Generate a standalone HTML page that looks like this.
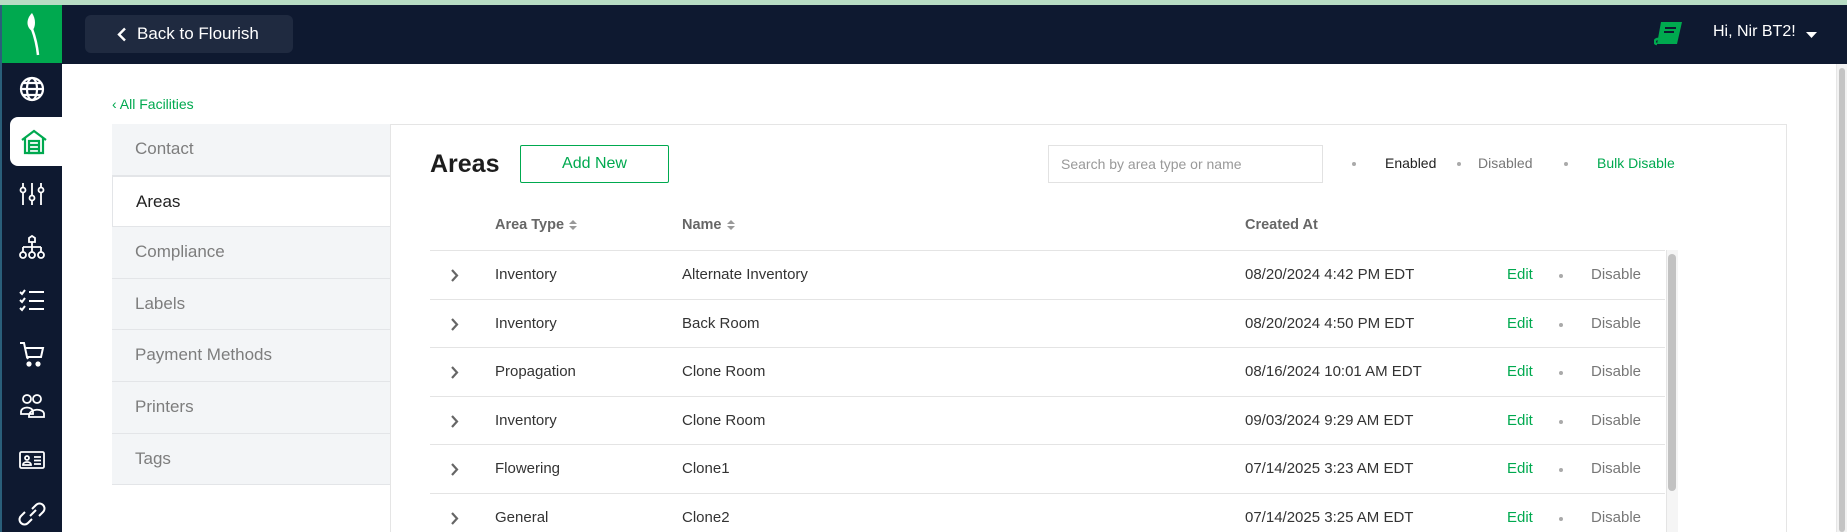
<!DOCTYPE html>
<html><head><meta charset="utf-8"><style>
*{box-sizing:border-box;margin:0;padding:0}
html,body{width:1847px;height:532px;overflow:hidden}
body{background:#fff;font-family:"Liberation Sans",sans-serif;position:relative}
.abs{position:absolute}
.top{left:0;top:0;width:1847px;height:5px;background:#b7dcc3}
.hdr{left:0;top:5px;width:1847px;height:59px;background:#0e1930}
.side{left:0;top:5px;width:62px;height:527px;background:#0e1930;border-left:2px solid #2a5f7a}
.logo{left:2px;top:5px;width:60px;height:58px;background:#00a94f}
.back{left:85px;top:15px;width:208px;height:38px;background:#1f2a40;border-radius:6px;color:#fff;font-size:17px;line-height:38px;padding-left:52px}
.ic{left:18px;width:28px;height:28px}
.tabs{left:112px;top:124px;width:278px}
.tab{height:51.6px;background:#f3f5f7;border-bottom:1px solid #e3e5e8;color:#7d7d7d;font-size:17px;line-height:50px;padding-left:23px}
.tab.act{background:#fff;color:#222;border:1px solid #e3e5e8;border-right:none}
.panel{left:390px;top:124px;width:1397px;height:420px;border:1px solid #e5e5e5}
.row{left:430px;width:1235px;height:49px;border-top:1px solid #e4e4e4;font-size:15px;color:#333}
.row span{position:absolute;top:15px}
.g{color:#00a94f}
.gr{color:#777}
.dot{width:4px;height:4px;border-radius:2px;background:#aaa;position:absolute}
.srt{display:inline-block;vertical-align:middle;margin-left:4px}
</style></head><body>
<div class="abs top"></div>
<div class="abs hdr"></div>
<div class="abs side"></div>
<div class="abs logo"><svg width="60" height="58" viewBox="0 0 60 58"><path d="M30 8 C24 14 24 22 30 26 C34 22 34 14 30 8Z" fill="#fff"/><path d="M30 24 C33 32 35 40 36 50" stroke="#fff" stroke-width="2.5" fill="none"/></svg></div>
<div class="abs back"><svg class="abs" style="left:32px;top:12px" width="10" height="15" viewBox="0 0 10 15"><path d="M8 1.5 L2 7.5 L8 13.5" stroke="#fff" stroke-width="2.4" fill="none"/></svg>Back to Flourish</div>
<svg class="abs ic" style="top:75px" viewBox="0 0 28 28" fill="none" stroke="#fff" stroke-width="2.2"><circle cx="14" cy="14" r="11"/><ellipse cx="14" cy="14" rx="5" ry="11"/><path d="M3 14H25M5 8H23M5 20H23"/></svg>
<div class="abs" style="left:10px;top:117px;width:52px;height:49px;background:#fff;border-radius:8px 0 0 8px"></div>
<svg class="abs ic" style="top:128px;left:20px" viewBox="0 0 28 28" fill="none" stroke="#00a94f" stroke-width="2.2"><path d="M2 12 L14 3 L26 12"/><path d="M5 10V25H23V10"/><rect x="9" y="13" width="10" height="12"/><path d="M9 17H19M9 21H19"/></svg>
<svg class="abs ic" style="top:180px" viewBox="0 0 28 28" fill="none" stroke="#fff" stroke-width="1.8"><path d="M5 3V25M14 3V25M23 3V25"/><circle cx="5" cy="10" r="2.5" fill="#0e1930"/><circle cx="14" cy="18" r="2.5" fill="#0e1930"/><circle cx="23" cy="10" r="2.5" fill="#0e1930"/></svg>
<svg class="abs ic" style="top:234px" viewBox="0 0 28 28" fill="none" stroke="#fff" stroke-width="1.8"><path d="M11 4L14 2L17 4V8H11Z"/><path d="M14 8V13M5 13H23M5 13V18M14 13V18M23 13V18"/><circle cx="5" cy="21" r="3"/><circle cx="14" cy="21" r="3"/><circle cx="23" cy="21" r="3"/></svg>
<svg class="abs ic" style="top:287px" viewBox="0 0 28 28" fill="none" stroke="#fff" stroke-width="2"><path d="M2 5L4 7L7 3M2 13L4 15L7 11M2 21L4 23L7 19"/><path d="M11 5H26M11 14H26M11 22H26"/></svg>
<svg class="abs ic" style="top:340px" viewBox="0 0 28 28" fill="none" stroke="#fff" stroke-width="2"><path d="M2 3H6L9 17H23L25 8H8"/><path d="M9 17 L10 19"/><circle cx="11" cy="24" r="1.6" fill="#fff"/><circle cx="20" cy="24" r="1.6" fill="#fff"/></svg>
<svg class="abs ic" style="top:392px" viewBox="0 0 28 28" fill="none" stroke="#fff" stroke-width="1.8"><circle cx="9" cy="7" r="4"/><circle cx="19" cy="7" r="4"/><path d="M3 20C3 14 15 14 15 20V22H3ZM11 24C11 16 26 16 26 22V25H11Z"/></svg>
<svg class="abs ic" style="top:446px" viewBox="0 0 28 28" fill="none" stroke="#fff" stroke-width="1.8"><rect x="2" y="6" width="24" height="16" rx="1.5"/><circle cx="9" cy="12" r="2"/><path d="M5 19C5 15 13 15 13 19ZM16 11H23M16 14.5H23M16 18H23"/></svg>
<svg class="abs ic" style="top:500px" viewBox="0 0 28 28" fill="none" stroke="#fff" stroke-width="2"><path d="M12 16L18 10"/><path d="M14 9L18 5C20 3 23 3 25 5C27 7 27 10 25 12L21 16"/><path d="M14 19L10 23C8 25 5 25 3 23C1 21 1 18 3 16L7 12"/></svg>
<svg class="abs" style="left:1654px;top:20px" width="30" height="28" viewBox="0 0 30 28"><path d="M7 2H28L23 24H3Z" fill="#00a94f"/><path d="M3 24C0 24 0 20 3 19H23" stroke="#00a94f" stroke-width="2.5" fill="none"/><path d="M11 8H22M10 12H20" stroke="#0e1930" stroke-width="2"/></svg>
<div class="abs" style="left:1713px;top:23px;color:#fff;font-size:16px">Hi, Nir BT2!</div>
<svg class="abs" style="left:1806px;top:32px" width="11" height="6" viewBox="0 0 11 6"><path d="M0 0H11L5.5 6Z" fill="#fff"/></svg>
<div class="abs" style="left:1836px;top:64px;width:11px;height:468px;background:#f2f2f2;border-left:1px solid #e6e6e6"></div>
<div class="abs" style="left:1839px;top:68px;width:6px;height:464px;background:#c4c4c4;border-radius:3px"></div>
<div class="abs g" style="left:112px;top:96px;font-size:14px">‹ All Facilities</div>
<div class="abs tabs">
<div class="tab">Contact</div><div class="tab act">Areas</div><div class="tab">Compliance</div><div class="tab">Labels</div><div class="tab">Payment Methods</div><div class="tab">Printers</div><div class="tab">Tags</div>
</div>
<div class="abs panel"></div>
<div class="abs" style="left:430px;top:150px;font-size:25px;font-weight:bold;color:#1d1d1d">Areas</div>
<div class="abs g" style="left:520px;top:145px;width:149px;height:38px;border:1px solid #00a94f;border-radius:2px;text-align:center;line-height:36px;font-size:16px">Add New</div>
<div class="abs" style="left:1048px;top:145px;width:275px;height:38px;border:1px solid #e2e2e2;color:#999;font-size:14px;line-height:36px;padding-left:12px">Search by area type or name</div>
<div class="dot" style="left:1352px;top:162px"></div>
<div class="abs" style="left:1385px;top:155px;font-size:14px;color:#222">Enabled</div>
<div class="dot" style="left:1457px;top:162px"></div>
<div class="abs gr" style="left:1478px;top:155px;font-size:14px">Disabled</div>
<div class="dot" style="left:1564px;top:162px"></div>
<div class="abs g" style="left:1597px;top:155px;font-size:14px">Bulk Disable</div>
<div class="abs" style="left:495px;top:217px;font-size:14.5px;font-weight:bold;color:#666">Area Type<svg class="srt" width="10" height="12" viewBox="0 0 10 12"><path d="M1 5L5 1L9 5ZM1 7L5 11L9 7Z" fill="#999"/></svg></div>
<div class="abs" style="left:682px;top:217px;font-size:14.5px;font-weight:bold;color:#666">Name<svg class="srt" width="10" height="12" viewBox="0 0 10 12"><path d="M1 5L5 1L9 5ZM1 7L5 11L9 7Z" fill="#999"/></svg></div>
<div class="abs" style="left:1245px;top:217px;font-size:14.5px;font-weight:bold;color:#666">Created At</div>
<div class="abs" style="left:1666px;top:250px;width:12px;height:282px;background:#f5f5f5;border-left:1px solid #e4e4e4"></div>
<div class="abs" style="left:1668px;top:254px;width:8px;height:237px;background:#c2c2c2;border-radius:4px"></div>

<div class="abs row" style="top:250px"><svg class="abs" style="left:20px;top:18px" width="9" height="13"><path d="M2 1L7 6.5L2 12" stroke="#666" stroke-width="2.2" fill="none"/></svg><span style="left:65px">Inventory</span><span style="left:252px">Alternate Inventory</span><span style="left:815px">08/20/2024 4:42 PM EDT</span><span class="g" style="left:1077px">Edit</span><i class="dot" style="left:1129px;top:23px"></i><span class="gr" style="left:1161px">Disable</span></div>
<div class="abs row" style="top:299px"><svg class="abs" style="left:20px;top:18px" width="9" height="13"><path d="M2 1L7 6.5L2 12" stroke="#666" stroke-width="2.2" fill="none"/></svg><span style="left:65px">Inventory</span><span style="left:252px">Back Room</span><span style="left:815px">08/20/2024 4:50 PM EDT</span><span class="g" style="left:1077px">Edit</span><i class="dot" style="left:1129px;top:23px"></i><span class="gr" style="left:1161px">Disable</span></div>
<div class="abs row" style="top:347px"><svg class="abs" style="left:20px;top:18px" width="9" height="13"><path d="M2 1L7 6.5L2 12" stroke="#666" stroke-width="2.2" fill="none"/></svg><span style="left:65px">Propagation</span><span style="left:252px">Clone Room</span><span style="left:815px">08/16/2024 10:01 AM EDT</span><span class="g" style="left:1077px">Edit</span><i class="dot" style="left:1129px;top:23px"></i><span class="gr" style="left:1161px">Disable</span></div>
<div class="abs row" style="top:396px"><svg class="abs" style="left:20px;top:18px" width="9" height="13"><path d="M2 1L7 6.5L2 12" stroke="#666" stroke-width="2.2" fill="none"/></svg><span style="left:65px">Inventory</span><span style="left:252px">Clone Room</span><span style="left:815px">09/03/2024 9:29 AM EDT</span><span class="g" style="left:1077px">Edit</span><i class="dot" style="left:1129px;top:23px"></i><span class="gr" style="left:1161px">Disable</span></div>
<div class="abs row" style="top:444px"><svg class="abs" style="left:20px;top:18px" width="9" height="13"><path d="M2 1L7 6.5L2 12" stroke="#666" stroke-width="2.2" fill="none"/></svg><span style="left:65px">Flowering</span><span style="left:252px">Clone1</span><span style="left:815px">07/14/2025 3:23 AM EDT</span><span class="g" style="left:1077px">Edit</span><i class="dot" style="left:1129px;top:23px"></i><span class="gr" style="left:1161px">Disable</span></div>
<div class="abs row" style="top:493px"><svg class="abs" style="left:20px;top:18px" width="9" height="13"><path d="M2 1L7 6.5L2 12" stroke="#666" stroke-width="2.2" fill="none"/></svg><span style="left:65px">General</span><span style="left:252px">Clone2</span><span style="left:815px">07/14/2025 3:25 AM EDT</span><span class="g" style="left:1077px">Edit</span><i class="dot" style="left:1129px;top:23px"></i><span class="gr" style="left:1161px">Disable</span></div>
</body></html>
